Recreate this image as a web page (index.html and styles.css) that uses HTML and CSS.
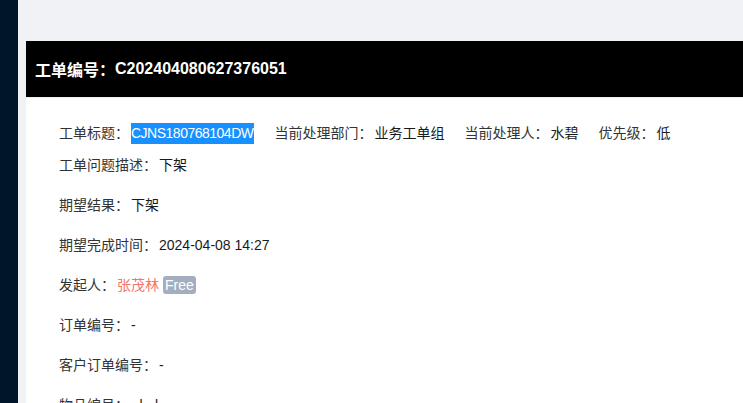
FILE: index.html
```html
<!DOCTYPE html>
<html lang="zh-CN">
<head>
<meta charset="utf-8">
<title>工单详情</title>
<link rel="stylesheet" href="styles.css">
</head>
<body>
<div class="layout">
  <aside class="sidebar"></aside>
  <main class="main">
    <section class="card">
      <header class="card-head">工单编号：<span class="code">C202404080627376051</span></header>
      <div class="card-body">
        <div class="row-wrap">
          <div class="item"><span class="label">工单标题：</span><span class="value hl">CJNS180768104DW</span></div>
          <div class="item"><span class="label">当前处理部门：</span><span class="value">业务工单组</span></div>
          <div class="item"><span class="label">当前处理人：</span><span class="value">水碧</span></div>
          <div class="item"><span class="label">优先级：</span><span class="value">低</span></div>
          <div class="item"><span class="label">工单问题描述：</span><span class="value">下架</span></div>
        </div>
        <div class="row"><span class="label">期望结果：</span><span class="value">下架</span></div>
        <div class="row"><span class="label">期望完成时间：</span><span class="value">2024-04-08 14:27</span></div>
        <div class="row"><span class="label">发起人：</span><span class="value name">张茂林</span><span class="badge">Free</span></div>
        <div class="row"><span class="label">订单编号：</span><span class="value">-</span></div>
        <div class="row"><span class="label">客户订单编号：</span><span class="value">-</span></div>
        <div class="row"><span class="label">物品编号：</span><span class="value">- l - l</span></div>
      </div>
    </section>
  </main>
</div>
</body>
</html>
```

FILE: styles.css
```css
html, body {
  margin: 0;
  padding: 0;
  height: 100%;
  overflow: hidden;
}

body {
  font-family: "Liberation Sans", "Noto Sans CJK SC", sans-serif;
  font-size: 14px;
  color: #333;
}

.layout {
  display: flex;
  height: 100vh;
}

.sidebar {
  width: 18px;
  flex: none;
  background: #001529;
}

.main {
  flex: 1;
  background: #f0f2f5;
  padding: 41px 0 0 8px;
  min-width: 0;
}

.card {
  background: #fff;
  height: 100%;
}

.card-head {
  height: 56px;
  background: #000;
  color: #fff;
  font-size: 16px;
  font-weight: bold;
  display: flex;
  align-items: center;
  padding-left: 9px;
  border-bottom: 1px solid #f0f0f0;
}

.card-body {
  padding: 24px 0 0 33px;
}

.row-wrap {
  display: flex;
  flex-wrap: wrap;
  column-gap: 20px;
  row-gap: 10px;
  line-height: 22px;
  margin-bottom: 18px;
}

.item {
  white-space: nowrap;
}

.row {
  line-height: 22px;
  margin-bottom: 18px;
  display: flex;
  align-items: center;
}

.label {
  color: #333;
}

.value {
  color: #1a1a1a;
  margin-left: 2px;
}

.hl {
  display: inline-block;
  background: #1890ff;
  color: #fff;
  line-height: 21px;
  letter-spacing: -0.5px;
  padding-right: 1px;
  vertical-align: top;
  margin-top: 1px;
}

.name {
  color: #f4756a;
}

.badge {
  display: inline-block;
  margin-left: 4px;
  background: #a4aec1;
  color: #fff;
  border-radius: 3px;
  padding: 0 2px;
  line-height: 18px;
  height: 18px;
}
```
